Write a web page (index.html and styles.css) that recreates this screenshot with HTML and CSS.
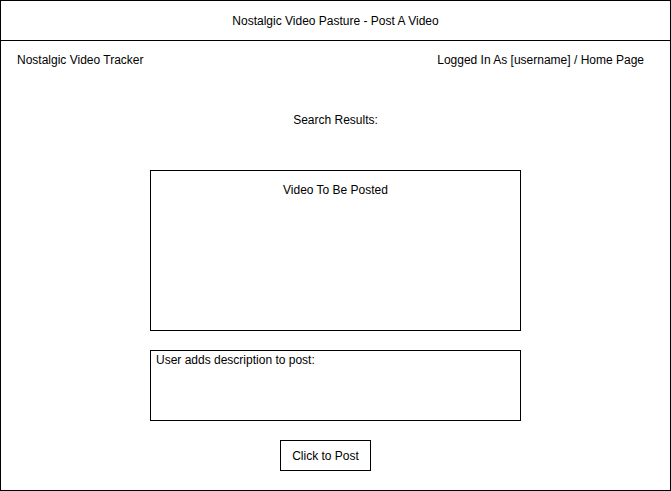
FILE: index.html
```html
<!DOCTYPE html>
<html>
<head>
<meta charset="utf-8">
<link rel="stylesheet" href="styles.css">
</head>
<body>
<div class="frame">
  <header class="title-bar">Nostalgic Video Pasture - Post A Video</header>
  <nav class="nav">
    <span class="brand">Nostalgic Video Tracker</span>
    <span class="user">Logged In As [username] / Home Page</span>
  </nav>
  <main class="content">
    <div class="search-label">Search Results:</div>
    <div class="video-box">Video To Be Posted</div>
    <div class="desc-box">User adds description to post:</div>
    <div class="post-btn">Click to Post</div>
  </main>
</div>
</body>
</html>
```

FILE: styles.css
```css
html, body {
  margin: 0;
  padding: 0;
  background: #fff;
}
body {
  font-family: "Liberation Sans", Arial, Helvetica, sans-serif;
  font-size: 12px;
  line-height: 14px;
  color: #000;
}
.frame {
  width: 671px;
  height: 491px;
  box-sizing: border-box;
  border: 1px solid #000;
  display: flex;
  flex-direction: column;
}
.title-bar {
  height: 39px;
  border-bottom: 1px solid #000;
  display: flex;
  align-items: center;
  justify-content: center;
}
.nav {
  height: 38px;
  display: flex;
  align-items: center;
  justify-content: space-between;
  padding: 0 26px 0 16px;
}
.content {
  display: flex;
  flex-direction: column;
  align-items: flex-start;
}
.search-label {
  align-self: center;
  margin-top: 34px;
}
.video-box {
  margin-top: 43px;
  margin-left: 149px;
  width: 371px;
  height: 161px;
  box-sizing: border-box;
  border: 1px solid #000;
  padding-top: 12px;
  text-align: center;
}
.desc-box {
  margin-top: 19px;
  margin-left: 149px;
  width: 371px;
  height: 71px;
  box-sizing: border-box;
  border: 1px solid #000;
  padding: 2px 5px;
}
.post-btn {
  margin-top: 19px;
  margin-left: 279px;
  width: 91px;
  height: 31px;
  box-sizing: border-box;
  border: 1px solid #000;
  display: flex;
  align-items: center;
  justify-content: center;
}
```
